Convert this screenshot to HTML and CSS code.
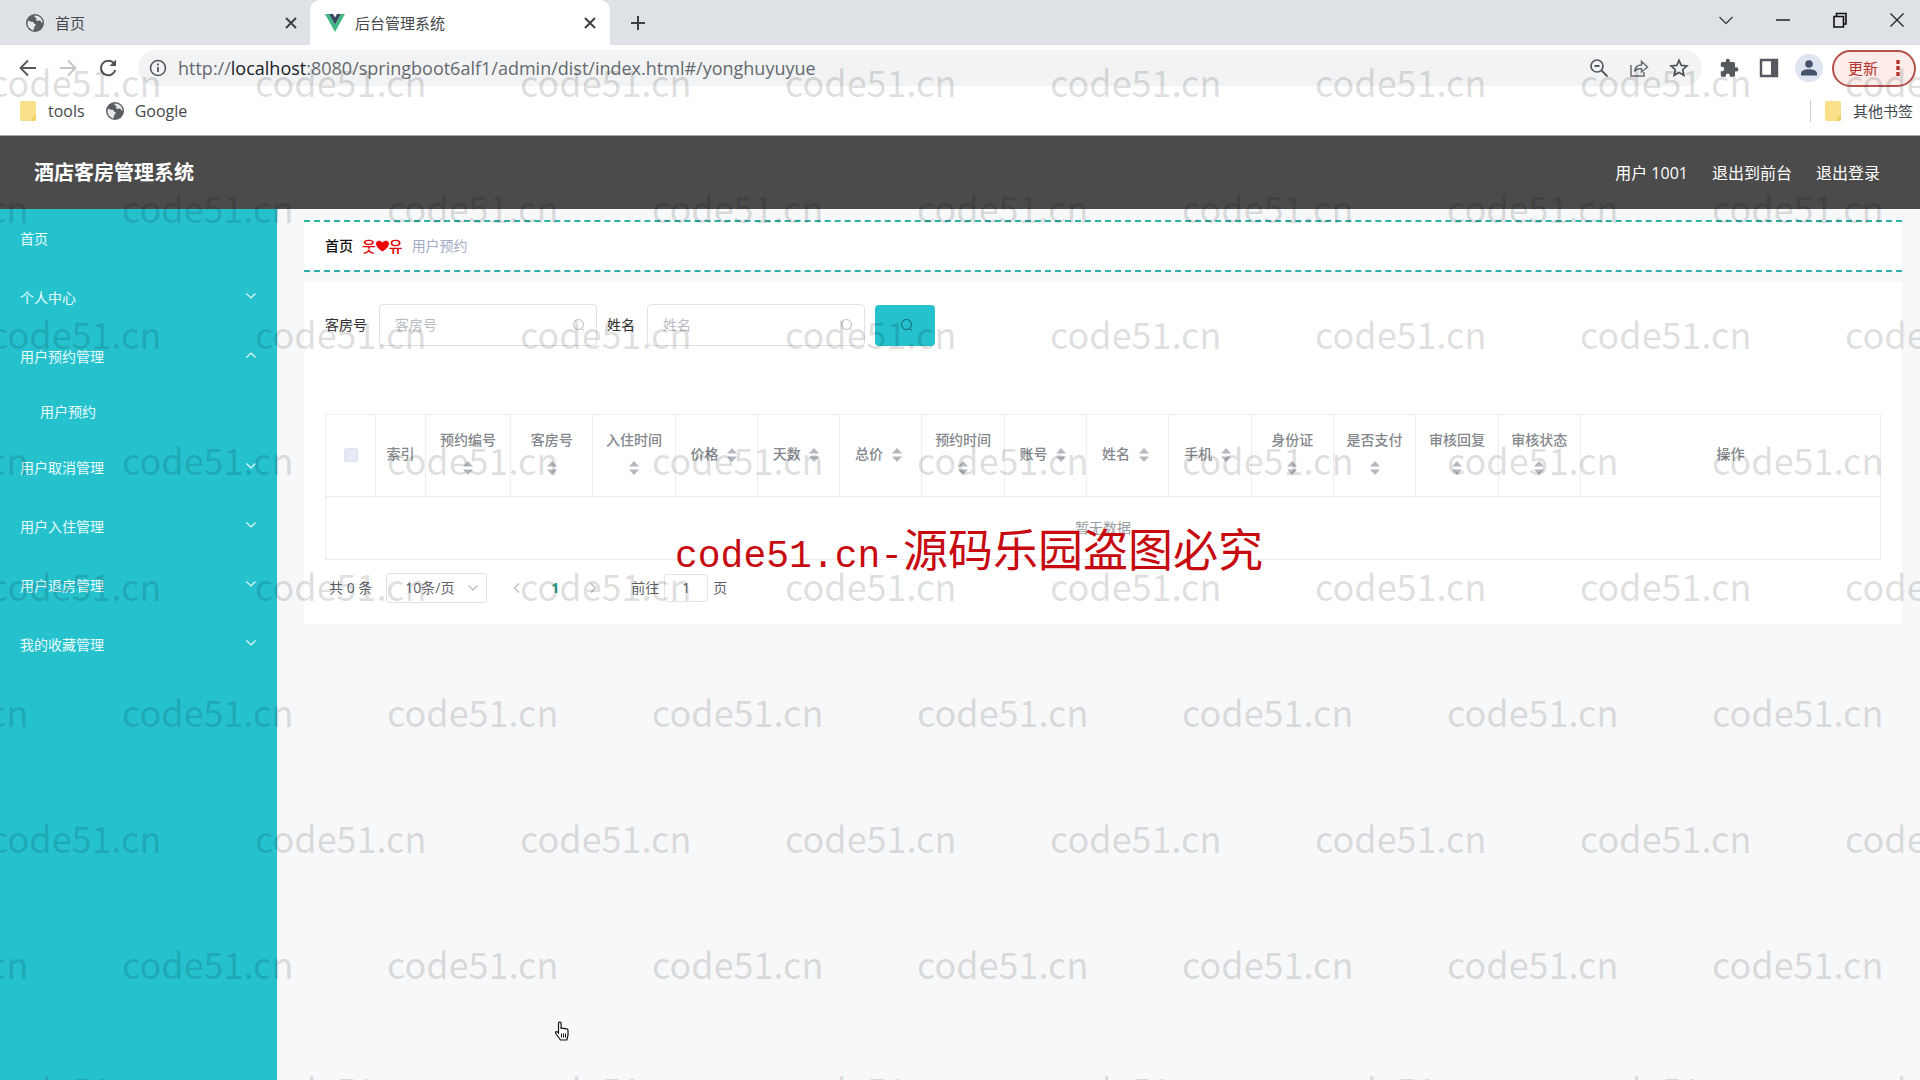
FILE: index.html
```html
<!DOCTYPE html>
<html lang="zh-CN">
<head>
<meta charset="utf-8">
<title>后台管理系统</title>
<link rel="stylesheet" href="styles.css">
</head>
<body>
<svg class="defs" aria-hidden="true">
  <symbol id="globe" viewBox="0 0 20 20"><circle cx="10" cy="10" r="9" fill="#5a5d61"/><path d="M3.2 7.5c1.500 1 2.600 1.200 4 1.200 1.800 0 1.300 2.300 3.300 2.300.9 1.500-1 2-1.300 3.500-.2 1.300-.4 2-.9 2.900C5 16.500 2.500 13.500 2.500 10z" fill="#e4e6ea"/><path d="M9.500 2.500C9 4 10 4.200 11 4.800c1.200.8-.6 2 .6 2.700 1.300.8 2.200-.6 3.600.2 1 .6.600 2 2.300 2.200C17.600 5.500 14 2.300 9.500 2.500z" fill="#e4e6ea"/></symbol>
  <symbol id="cross" viewBox="0 0 12 12"><path d="M1 1l10 10M11 1L1 11" stroke="#3c4043" stroke-width="2"/></symbol>
  <symbol id="folder" viewBox="0 0 18 20"><rect x="1" y="0" width="16" height="20" rx="2" fill="#fbe08a"/><path d="M17 13l-4 4v3h2a2 2 0 0 0 2-2z" fill="#f2cf62"/></symbol>
  <symbol id="down" viewBox="0 0 12 12"><path d="M1.500 3.500L6 8l4.500-4.500" fill="none" stroke="currentColor" stroke-width="1.200"/></symbol>
  <symbol id="up" viewBox="0 0 12 12"><path d="M1.500 8.500L6 4l4.500 4.500" fill="none" stroke="currentColor" stroke-width="1.200"/></symbol>
  <symbol id="search" viewBox="0 0 14 14"><circle cx="6.500" cy="6.500" r="5" fill="none" stroke="currentColor"/><path d="M9.500 10.500l2.500 2" stroke="currentColor"/></symbol>
  <symbol id="sort" viewBox="0 0 10 14"><path d="M5 0l5 5.500H0zM5 14l5-5.500H0z" fill="#b4b8bf"/></symbol>
</svg>

<div class="tabs">
  <div class="tab"><svg class="i20"><use href="#globe"/></svg><span class="tab-title">首页</span><button class="plain" aria-label="关闭"><svg class="i12"><use href="#cross"/></svg></button></div>
  <div class="tab tab-active"><svg class="i20" viewBox="0 0 20 20"><path d="M0 1h4l6 10.500L16 1h4L10 19z" fill="#41b883"/><path d="M4 1h4l2 3.500L12 1h4l-6 10.500z" fill="#35495e"/></svg><span class="tab-title">后台管理系统</span><button class="plain" aria-label="关闭"><svg class="i12"><use href="#cross"/></svg></button></div>
  <button class="plain new-tab" aria-label="新标签页"><svg class="i16" viewBox="0 0 16 16"><path d="M8 1v14M1 8h14" stroke="#3c4043" stroke-width="2"/></svg></button>
  <div class="window-buttons">
    <button class="plain" aria-label="搜索标签页"><svg class="i16" viewBox="0 0 16 16"><path d="M1.500 5L8 11.500 14.500 5" fill="none" stroke="#3c4043" stroke-width="1.300"/></svg></button>
    <button class="plain" aria-label="最小化"><svg class="i16" viewBox="0 0 16 16"><path d="M1 8h14" stroke="#222" stroke-width="1.500"/></svg></button>
    <button class="plain" aria-label="还原"><svg class="i16" viewBox="0 0 16 16"><path d="M2 4.500h9.500V15H2zM4.500 4V1.500H14V12h-2.500" fill="none" stroke="#111" stroke-width="1.600"/></svg></button>
    <button class="plain" aria-label="关闭窗口"><svg class="i16" viewBox="0 0 16 16"><path d="M1.500 1.500l13 13M14.500 1.500l-13 13" stroke="#222" stroke-width="1.300"/></svg></button>
  </div>
</div>

<div class="toolbar">
  <div class="nav-buttons">
    <button class="plain" aria-label="后退"><svg class="i20" viewBox="0 0 20 20"><path d="M18 10H3M10 2.500L2.500 10l7.500 7.500" fill="none" stroke="#55585c" stroke-width="1.800"/></svg></button>
    <button class="plain" aria-label="前进"><svg class="i20" viewBox="0 0 20 20"><path d="M2 10h15M10 2.500l7.500 7.500-7.500 7.500" fill="none" stroke="#c2c4c7" stroke-width="1.800"/></svg></button>
    <button class="plain" aria-label="重新加载"><svg class="i20" viewBox="0 0 20 20"><path d="M16 5.500A7.300 7.300 0 1 0 17.300 12" fill="none" stroke="#505357" stroke-width="2"/><path d="M18 1.500V8h-6.500z" fill="#505357"/></svg></button>
  </div>
  <div class="address">
    <svg class="i18" viewBox="0 0 18 18"><circle cx="9" cy="9" r="7.500" fill="none" stroke="#55585c" stroke-width="1.600"/><path d="M9 8v5M9 4.500v2" stroke="#55585c" stroke-width="1.800"/></svg>
    <span class="url">http://<b>localhost</b>:8080/springboot6alf1/admin/dist/index.html#/yonghuyuyue</span>
    <button class="plain" aria-label="缩放"><svg class="i20" viewBox="0 0 20 20"><circle cx="8" cy="8" r="6" fill="none" stroke="#55585c" stroke-width="1.700"/><path d="M12.500 12.500l6 6M5.500 8h5" stroke="#55585c" stroke-width="1.900"/></svg></button>
    <button class="plain" aria-label="分享"><svg class="i20" viewBox="0 0 20 20"><path d="M2 7v11h13v-4M5.500 13.500c.5-4.500 3-6.500 7-6.500V3.500L18.500 9l-6 5v-3.500c-3.500 0-5.500.8-7 3z" fill="none" stroke="#6b6e72" stroke-width="1.500"/></svg></button>
    <button class="plain" aria-label="收藏"><svg class="i20" viewBox="0 0 20 20"><path d="M10 2.300l2.300 5.100 5.600.6-4.200 3.700 1.200 5.500-4.900-2.800-4.900 2.800 1.200-5.500L2.100 8l5.600-.6z" fill="none" stroke="#505357" stroke-width="1.700"/></svg></button>
  </div>
  <button class="plain" aria-label="扩展程序"><svg class="i20" viewBox="0 0 20 20"><path d="M17.300 9.300H16V5.500A1.500 1.500 0 0 0 14.500 4h-3.700V2.800a2 2 0 0 0-4 0V4H3.300A1.500 1.500 0 0 0 1.800 5.500v3.300H3a2.200 2.200 0 0 1 0 4.400H1.800v4A1.500 1.500 0 0 0 3.300 18.700h3.500v-1.200a2 2 0 0 1 4 0v1.200h3.700a1.500 1.500 0 0 0 1.500-1.500v-3.700h1.300a2.100 2.100 0 0 0 0-4.200z" fill="#55585c"/></svg></button>
  <button class="plain" aria-label="侧边栏"><svg class="i20" viewBox="0 0 20 20"><path d="M2 2h16v16H2z" fill="#fff" stroke="#55585c" stroke-width="2.400"/><path d="M12 2h6v16h-6z" fill="#55585c"/></svg></button>
  <button class="plain avatar" aria-label="个人资料"><svg class="i16" viewBox="0 0 16 16"><circle cx="8" cy="4" r="3.800" fill="#44536b"/><path d="M0 15.500v-2C0 10.500 4 9.300 8 9.300s8 1.200 8 4.200v2z" fill="#44536b"/></svg></button>
  <button class="update">更新<svg class="i18" viewBox="0 0 18 18"><path d="M9 1v4M9 7v4M9 13v4" stroke="#b3342c" stroke-width="3.400"/></svg></button>
</div>

<div class="bookmarks">
  <a href="#tools"><svg class="i20"><use href="#folder"/></svg>tools</a>
  <a href="#google"><svg class="i20"><use href="#globe"/></svg>Google</a>
  <a href="#other" class="other"><svg class="i20"><use href="#folder"/></svg>其他书签</a>
</div>

<header class="header">
  <h1>酒店客房管理系统</h1>
  <span>用户 1001</span>
  <a href="#front">退出到前台</a>
  <a href="#logout">退出登录</a>
</header>

<div class="body">
  <nav class="sidebar">
    <a href="#home">首页</a>
    <a href="#center">个人中心<svg class="i12"><use href="#down"/></svg></a>
    <a href="#booking">用户预约管理<svg class="i12"><use href="#up"/></svg></a>
    <a href="#yonghuyuyue" class="sub">用户预约</a>
    <a href="#cancel">用户取消管理<svg class="i12"><use href="#down"/></svg></a>
    <a href="#checkin">用户入住管理<svg class="i12"><use href="#down"/></svg></a>
    <a href="#checkout">用户退房管理<svg class="i12"><use href="#down"/></svg></a>
    <a href="#favorites">我的收藏管理<svg class="i12"><use href="#down"/></svg></a>
  </nav>

  <main class="main">
    <div class="crumbs"><a href="#home">首页</a><span class="crumb-sep">웃<svg class="heart" viewBox="0 0 14 12"><path d="M7 12C3 9 0 6.500 0 3.500 0 .500 4-1 7 2.200 10-1 14 .500 14 3.500 14 6.500 11 9 7 12z" fill="#f00000"/></svg>유</span><span class="crumb-now">用户预约</span></div>
    <section class="panel">
      <form class="search">
        <label for="room">客房号</label>
        <div class="field"><input id="room" type="text" placeholder="客房号"><svg class="i14"><use href="#search"/></svg></div>
        <label for="name">姓名</label>
        <div class="field"><input id="name" type="text" placeholder="姓名"><svg class="i14"><use href="#search"/></svg></div>
        <button type="button" class="go" aria-label="查询"><svg class="i14"><use href="#search"/></svg></button>
      </form>

      <table class="grid">
        <colgroup><col class="c-check"><col class="c-index"><col class="c-code"><col span="13"><col class="c-action"></colgroup>
        <thead><tr>
          <th><input type="checkbox" aria-label="全选"></th>
          <th>索引</th>
          <th>预约编号 <svg class="sort"><use href="#sort"/></svg></th>
          <th>客房号 <svg class="sort"><use href="#sort"/></svg></th>
          <th>入住时间 <svg class="sort"><use href="#sort"/></svg></th>
          <th>价格 <svg class="sort"><use href="#sort"/></svg></th>
          <th>天数 <svg class="sort"><use href="#sort"/></svg></th>
          <th>总价 <svg class="sort"><use href="#sort"/></svg></th>
          <th>预约时间 <svg class="sort"><use href="#sort"/></svg></th>
          <th>账号 <svg class="sort"><use href="#sort"/></svg></th>
          <th>姓名 <svg class="sort"><use href="#sort"/></svg></th>
          <th>手机 <svg class="sort"><use href="#sort"/></svg></th>
          <th>身份证 <svg class="sort"><use href="#sort"/></svg></th>
          <th>是否支付 <svg class="sort"><use href="#sort"/></svg></th>
          <th>审核回复 <svg class="sort"><use href="#sort"/></svg></th>
          <th>审核状态 <svg class="sort"><use href="#sort"/></svg></th>
          <th>操作</th>
        </tr></thead>
        <tbody><tr><td colspan="17">暂无数据</td></tr></tbody>
      </table>

      <div class="pager">
        <span>共 0 条</span>
        <div class="size"><select aria-label="每页条数"><option>10条/页</option></select><svg class="i12"><use href="#down"/></svg></div>
        <div class="pages">
          <button class="plain" aria-label="上一页"><svg class="i12" viewBox="0 0 12 12"><path d="M8 1.500L3.500 6 8 10.500" fill="none" stroke="#b4b8bf" stroke-width="1.200"/></svg></button>
          <button class="plain page-now">1</button>
          <button class="plain" aria-label="下一页"><svg class="i12" viewBox="0 0 12 12"><path d="M4 1.500L8.500 6 4 10.500" fill="none" stroke="#b4b8bf" stroke-width="1.200"/></svg></button>
        </div>
        <label for="jump">前往</label><input id="jump" class="jump" type="text" value="1"><span>页</span>
      </div>
    </section>
  </main>
</div>

<div class="marks" aria-hidden="true">
  <div class="row"><i>code51.cn</i><i>code51.cn</i><i>code51.cn</i><i>code51.cn</i><i>code51.cn</i><i>code51.cn</i><i>code51.cn</i><i>code51.cn</i></div>
  <div class="row shifted"><i>code51.cn</i><i>code51.cn</i><i>code51.cn</i><i>code51.cn</i><i>code51.cn</i><i>code51.cn</i><i>code51.cn</i><i>code51.cn</i></div>
  <div class="row"><i>code51.cn</i><i>code51.cn</i><i>code51.cn</i><i>code51.cn</i><i>code51.cn</i><i>code51.cn</i><i>code51.cn</i><i>code51.cn</i></div>
  <div class="row shifted"><i>code51.cn</i><i>code51.cn</i><i>code51.cn</i><i>code51.cn</i><i>code51.cn</i><i>code51.cn</i><i>code51.cn</i><i>code51.cn</i></div>
  <div class="row"><i>code51.cn</i><i>code51.cn</i><i>code51.cn</i><i>code51.cn</i><i>code51.cn</i><i>code51.cn</i><i>code51.cn</i><i>code51.cn</i></div>
  <div class="row shifted"><i>code51.cn</i><i>code51.cn</i><i>code51.cn</i><i>code51.cn</i><i>code51.cn</i><i>code51.cn</i><i>code51.cn</i><i>code51.cn</i></div>
  <div class="row"><i>code51.cn</i><i>code51.cn</i><i>code51.cn</i><i>code51.cn</i><i>code51.cn</i><i>code51.cn</i><i>code51.cn</i><i>code51.cn</i></div>
  <div class="row shifted"><i>code51.cn</i><i>code51.cn</i><i>code51.cn</i><i>code51.cn</i><i>code51.cn</i><i>code51.cn</i><i>code51.cn</i><i>code51.cn</i></div>
  <div class="row"><i>code51.cn</i><i>code51.cn</i><i>code51.cn</i><i>code51.cn</i><i>code51.cn</i><i>code51.cn</i><i>code51.cn</i><i>code51.cn</i></div>
</div>
<div class="notice"><span>code51.cn-</span>源码乐园盗图必究</div>
<svg class="cursor" viewBox="0 0 16 20" aria-hidden="true"><path d="M4.500 12V2.500a1.300 1.300 0 0 1 2.600 0V8c0-1.500 2.400-1.300 2.400.2 0-1.300 2.300-1 2.300.4 0-1.200 2.200-.8 2.200.8v4.800L12.800 19H6.500L1.800 12.500c-1-1.600.8-2.600 1.800-1.400z" fill="#fff" stroke="#111" stroke-width="1.200"/><path d="M7.500 12.500v4M9.500 12.500v4M11.500 12.500v4" stroke="#111"/></svg>
</body>
</html>
```
FILE: styles.css
```css
* { box-sizing: border-box; }
body {
  position: relative;
  margin: 0;
  min-height: 100vh;
  display: flex;
  flex-direction: column;
  overflow: hidden;
  background: #f7f8fa;
  font: 14px/20px "Open Sans", "Noto Sans CJK SC", sans-serif;
  color: #333;
}
a { color: inherit; text-decoration: none; }
button, input, select { font: inherit; color: inherit; }
svg { display: block; flex: none; }
.defs { position: absolute; width: 0; height: 0; }
.i12 { width: 12px; height: 12px; }
.i14 { width: 14px; height: 14px; }
.i16 { width: 16px; height: 16px; }
.i18 { width: 18px; height: 18px; }
.i20 { width: 20px; height: 20px; }
.plain { padding: 0; border: 0; background: none; }

/* browser frame */
.tabs { display: flex; align-items: center; height: 45px; background: #dee1e6; font-size: 15px; color: #45484c; }
.tab { display: flex; align-items: center; gap: 10px; width: 310px; height: 45px; padding: 0 13px 0 25px; }
.tab-active { width: 300px; padding: 0 14px 0 15px; border-radius: 10px 10px 0 0; background: #fff; }
.tab-title { flex: 1; }
.new-tab { margin-left: 20px; }
.window-buttons { display: flex; gap: 41px; margin-left: auto; padding: 0 15px 6px 0; }
.toolbar { display: flex; align-items: center; gap: 20px; height: 46px; padding: 0 4px 0 18px; background: #fff; }
.nav-buttons { display: flex; gap: 20px; }
.address { display: flex; flex: 1; align-items: center; gap: 20px; height: 36px; margin-right: -3px; padding: 0 13px 0 11px; border-radius: 18px; background: #f1f3f4; }
.url { flex: 1; margin-left: -9px; font-size: 18px; color: #66696d; }
.url b { font-weight: 400; color: #202124; }
.avatar { display: grid; place-items: center; width: 28px; height: 28px; margin: 0 -11px 0 -4px; border-radius: 50%; background: #dfe5f0; }
.update { display: flex; align-items: center; justify-content: space-between; width: 84px; height: 37px; padding: 0 7px 0 14px; border: 2px solid #b5524c; border-radius: 19px; background: #fcecea; font-size: 15px; color: #b3342c; }
.bookmarks { display: flex; gap: 20px; height: 45px; padding: 0 7px 4px 18px; border-bottom: 1px solid #aaa; background: #fff; font-size: 16px; color: #45484c; }
.bookmarks a { display: flex; align-items: center; gap: 10px; }
.bookmarks .other { margin-left: auto; font-size: 15px; }
.bookmarks .other::before { content: ""; width: 1px; height: 22px; margin-right: 2px; background: #ccc; }

/* application */
.header { display: flex; align-items: center; gap: 24px; height: 73px; padding: 0 40px 0 34px; background: #4b4b4b; font-size: 16px; color: #fff; }
.header h1 { flex: 1; margin: 0; font-size: 20px; line-height: 24px; font-weight: 700; }
.body { display: flex; flex: 1; }
.sidebar { flex: none; width: 277px; background: #25c2ce; color: #e9fbfc; }
.sidebar a { display: flex; align-items: center; justify-content: space-between; height: 59px; padding: 0 20px; }
.sidebar svg { margin-bottom: 4px; }
.sidebar .sub { height: 52px; padding-left: 40px; }
.main { flex: 1; min-width: 0; padding: 11px 18px 0 27px; }
.crumbs { display: flex; align-items: center; gap: 9px; height: 52px; padding: 0 21px; border: dashed #2fafa8; border-width: 2px 0; background: #fff; }
.crumbs a { font-weight: 500; color: #111; }
.crumb-sep { display: flex; align-items: center; font-family: "Noto Sans CJK KR", sans-serif; font-size: 15px; font-weight: 500; color: #e00000; }
.heart { width: 13px; height: 12px; }
.crumb-now { color: #a3aac6; }
.panel { margin-top: 10px; padding: 22px 21px; background: #fff; }
.search { display: flex; align-items: center; gap: 12px; }
.field { display: flex; align-items: center; width: 218px; height: 42px; margin-right: -2px; padding: 0 10px 0 15px; border: 1px solid #e0e2e6; border-radius: 4px; color: #b9bcc2; }
.field input { flex: 1; min-width: 0; padding: 0; border: 0; outline: 0; background: none; }
.field input::placeholder { color: #b9bcc2; opacity: 1; }
.go { display: grid; place-items: center; width: 60px; height: 41px; padding: 0 0 0 4px; border: 0; border-radius: 4px; background: #25c2ce; color: #14606c; }
.grid { width: 100%; margin-top: 68px; border-collapse: collapse; table-layout: fixed; color: #84878c; }
.grid th, .grid td { border: 1px solid #ebedf0; text-align: center; }
.grid th { height: 82px; padding: 0 10px 5px; font-weight: 500; line-height: 27px; }
.grid td { height: 63px; padding: 0; color: #999ca1; }
.c-check, .c-index { width: 50px; }
.c-code { width: 85px; }
.c-action { width: 300px; }
.grid input { appearance: none; display: block; width: 14px; height: 14px; margin: 4px auto 0; border: 1px solid #dde1ec; border-radius: 2px; background: #e6eaf4; }
.sort { display: inline-block; width: 10px; height: 14px; margin: 0 5px; vertical-align: middle; }
.pager { display: flex; align-items: center; height: 29px; margin-top: 13px; padding-left: 4px; color: #606266; }
.size { display: flex; align-items: center; width: 101px; height: 30px; margin-left: 14px; padding-right: 7px; border: 1px solid #dfe1e5; border-radius: 3px; color: #b4b8bf; }
.size select { flex: 1; padding: 0 0 0 18px; border: 0; appearance: none; background: none; color: #606266; }
.pages { display: flex; gap: 27px; padding: 0 32px 0 24px; }
.page-now { width: 10px; font-weight: 700; color: #26a280; }
.jump { width: 44px; height: 28px; margin: 0 5px; padding: 0; border: 1px solid #e3e5e9; border-radius: 3px; text-align: center; }

/* overlays */
.marks { position: absolute; inset: 0; overflow: hidden; padding-top: 18px; pointer-events: none; font-family: "Noto Sans CJK SC", sans-serif; font-size: 36px; color: rgba(0, 0, 0, .14); }
.row { display: flex; align-items: center; height: 126px; margin-left: -10px; }
.row.shifted { margin-left: -143px; }
.row i { flex: none; width: 265px; font-style: normal; }
.notice { position: absolute; top: 520px; left: 675px; pointer-events: none; white-space: nowrap; font: 45px/56px "Noto Sans CJK SC", sans-serif; color: #c60a10; }
.notice span { font-family: "Liberation Mono", monospace; font-size: 38px; }
.cursor { position: absolute; top: 1021px; left: 554px; width: 16px; height: 20px; }
```
